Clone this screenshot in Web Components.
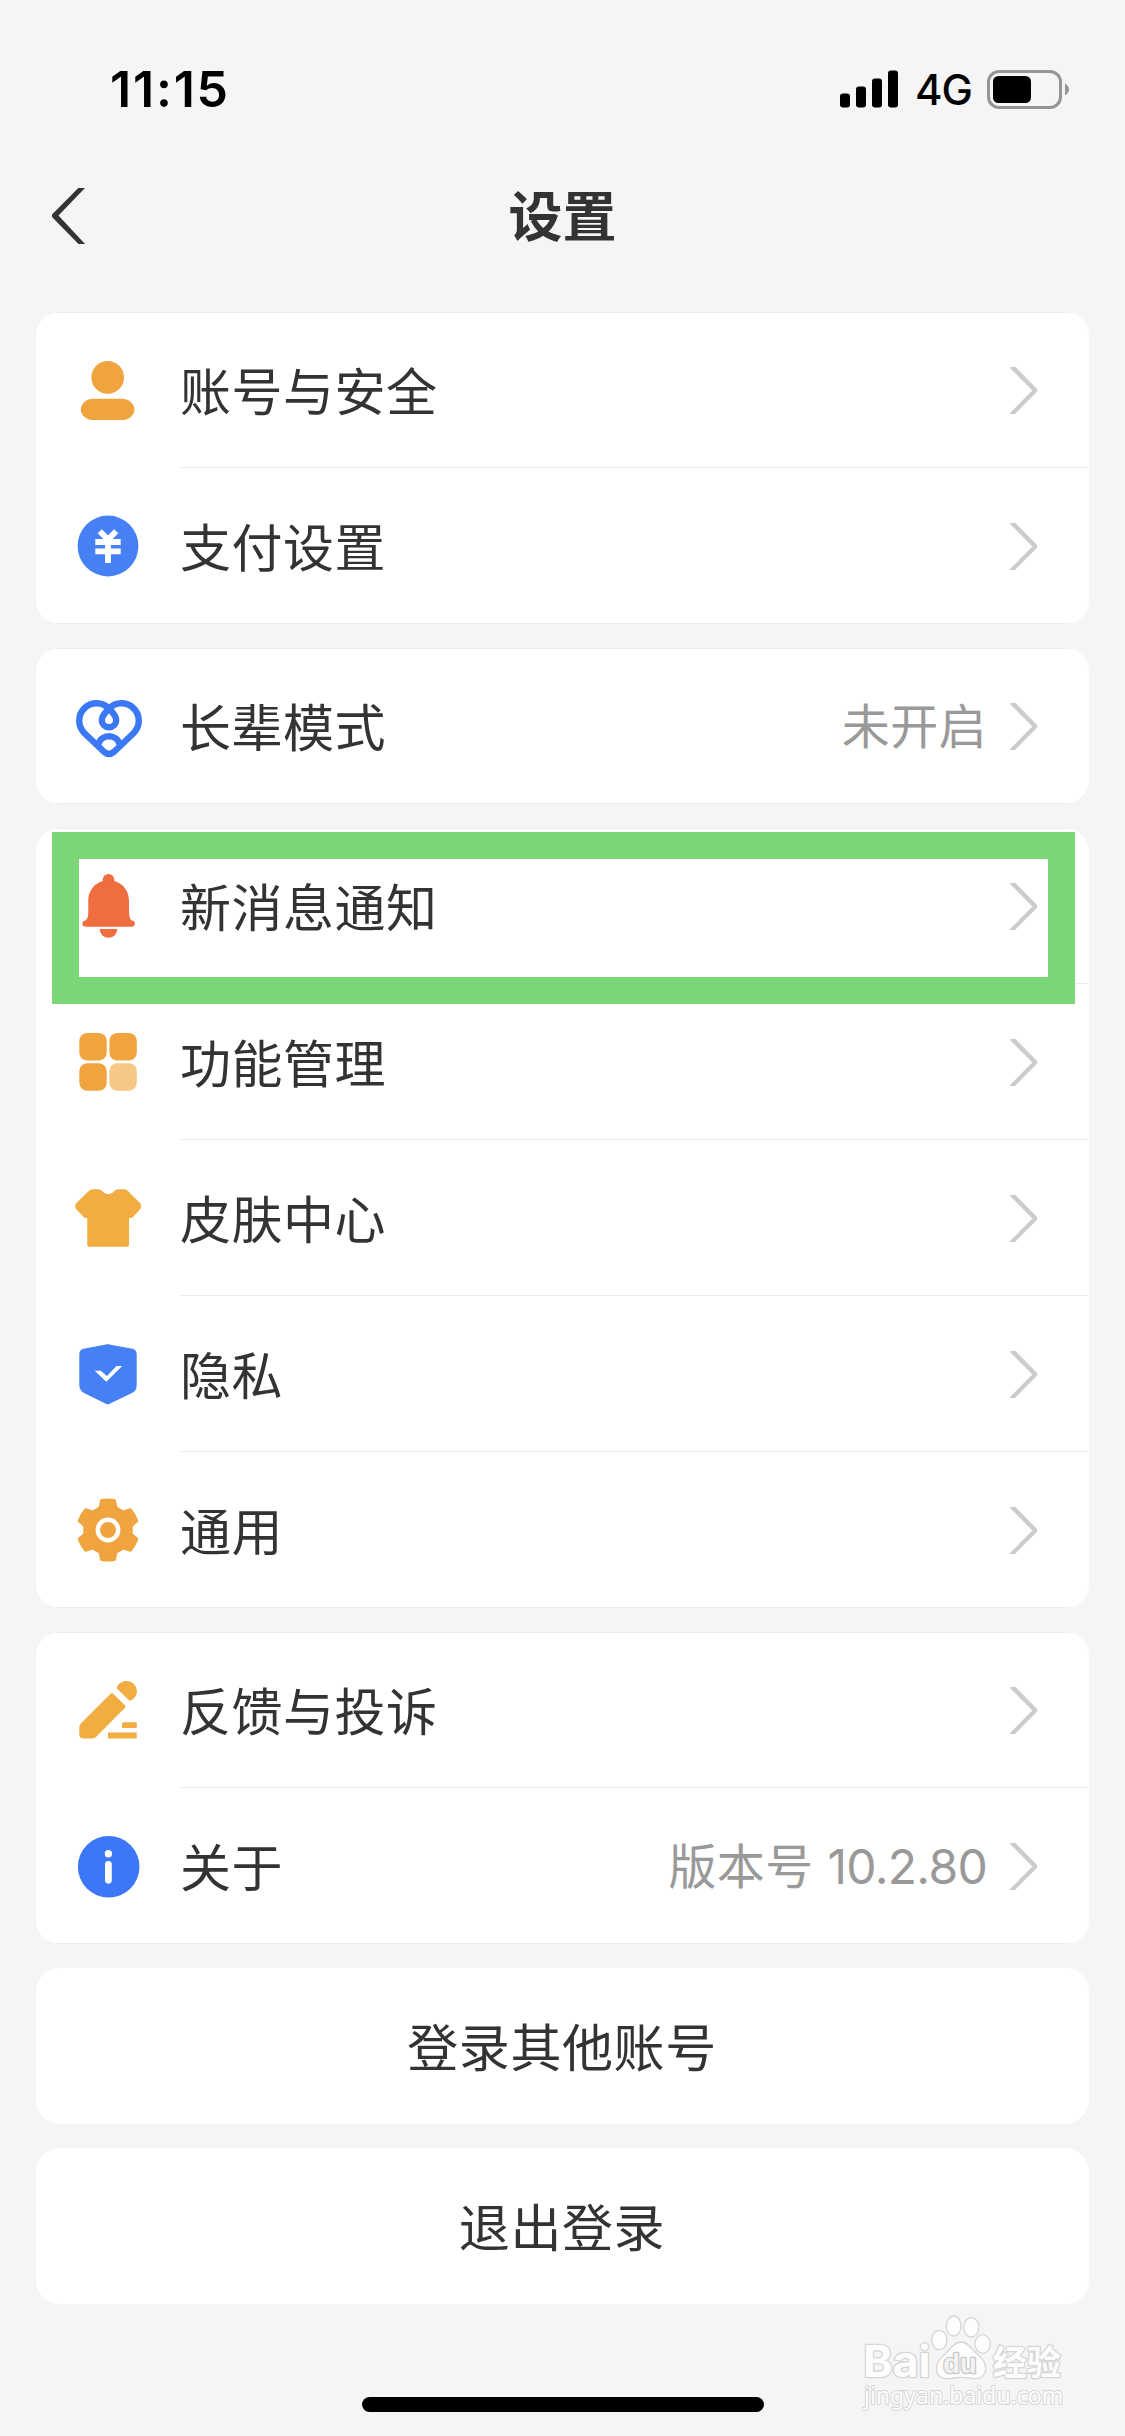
<!DOCTYPE html>
<html lang="zh-CN">
<head>
<meta charset="utf-8">
<title>设置</title>
<style>
html, body { margin: 0; padding: 0; }
body { width: 1125px; height: 2436px; overflow: hidden; background: #f5f5f5; font-family: Inter, "Noto Sans CJK SC", sans-serif; color: #333; }
</style>
</head>
<body>
<settings-page>
  <status-bar time="11:15" network="4G"></status-bar>
  <nav-header>设置</nav-header>
  <settings-card>
    <settings-row icon="user">账号与安全</settings-row>
    <settings-row icon="yen">支付设置</settings-row>
  </settings-card>
  <settings-card>
    <settings-row icon="heart" value="未开启">长辈模式</settings-row>
  </settings-card>
  <settings-card>
    <settings-row icon="bell">新消息通知</settings-row>
    <settings-row icon="grid">功能管理</settings-row>
    <settings-row icon="shirt">皮肤中心</settings-row>
    <settings-row icon="shield">隐私</settings-row>
    <settings-row icon="gear">通用</settings-row>
    <highlight-frame slot="overlay"></highlight-frame>
  </settings-card>
  <settings-card>
    <settings-row icon="pencil">反馈与投诉</settings-row>
    <settings-row icon="info" value="版本号 10.2.80">关于</settings-row>
  </settings-card>
  <action-button>登录其他账号</action-button>
  <action-button>退出登录</action-button>
  <home-indicator slot="footer"></home-indicator>
  <site-watermark slot="footer"></site-watermark>
</settings-page>
<script>
const define = (name, render) => customElements.define(name, class extends HTMLElement {
  constructor() { super(); this.attachShadow({ mode: "open" }); }
  connectedCallback() { this.shadowRoot.innerHTML = render(this); }
});

const icons = {
  user: `<g fill="#efa43f"><circle cx="35.7" cy="23.4" r="16.3"/><rect x="8.8" y="44.8" width="53.6" height="21.2" rx="12.5" ry="10.6"/></g>`,
  yen: `<circle cx="36" cy="36" r="30.4" fill="#4580f5"/><path d="M27.8 21.2 36 29.6 44.2 21.2M23.3 32H48.7M23.3 41.3H48.7M36 29V53" fill="none" stroke="#fff" stroke-width="5.8"/>`,
  heart: `<g fill="none" stroke="#3b78f6" stroke-width="6.4" stroke-linejoin="round"><path d="M7.2 30.7A17.4 17.4 0 0 1 24.7 13.3C30.5 13.3 34 15.6 37 18.6C40 21.6 44.2 25.5 44.2 30.2A7.2 7 0 0 1 29.8 30.2C29.8 25.5 34 21.6 37 18.6C40 15.6 43.5 13.3 49.3 13.3A17.4 17.4 0 0 1 66.8 30.7C66.8 37 64.5 40.2 61 43.7L41.8 62Q37 66 32.2 62L13 43.7C9.5 40.2 7.2 37 7.2 30.7Z"/><path d="M26.3 54.5C29 43.5 45 43.5 47.7 54.5"/></g>`,
  bell: `<g fill="#ee6e3f"><circle cx="36.5" cy="10" r="5.9"/><path d="M16.3 31C16.3 19 25 10.3 36.6 10.3S57 19 57 31V42C57 46 58 49 59.5 50.5A3.1 3.1 0 0 1 60 56.7H13.3A3.1 3.1 0 0 1 13.8 50.5C15.3 49 16.3 46 16.3 42Z"/><path d="M27.7 59H45.3A8.8 8.7 0 0 1 27.7 59Z"/></g>`,
  grid: `<g fill="#efa43f"><rect x="7.3" y="7" width="27.4" height="27.6" rx="8"/><rect x="37.4" y="7" width="27.4" height="27.6" rx="8"/><rect x="7.3" y="37.2" width="27.4" height="27.6" rx="8"/><rect x="37.4" y="37.2" width="27.4" height="27.6" rx="8" fill="#f5c985"/></g>`,
  shirt: `<path fill="#f1ad42" d="M20.5 7.3H26C31 7.3 30.5 12 36.3 12S41.7 7.3 46.7 7.3H52.2Q54.2 7.3 55.7 8.8L68 21Q70.2 24 68.4 27L61.5 34.5Q60.2 36 58.5 36H57V63Q57 64.8 55.2 64.8H17Q15.3 64.8 15.3 63V36H14.2Q12.500 36 11.2 34.5L4.2 27.3Q2 24.3 4.4 21L17 8.8Q18.5 7.3 20.5 7.3Z"/>`,
  shield: `<path fill="#4580f5" d="M34 6.4Q35.7 5.8 37.4 6.4L60.5 10.7Q64.7 12 64.7 16V47Q64.7 52.5 60.5 54.8L37.6 65.8Q35.7 66.8 33.8 65.8L11.5 54.8Q7.3 52 7.3 47V16Q7.3 12 11.5 10.7Z"/><path fill="#fff" d="M22.7 32.8H28.7L35 38 44.5 28H50.2L34.3 43.8Z"/>`,
  gear: `<g transform="translate(36 36)"><g fill="#efa43f" stroke="#efa43f" stroke-width="3" stroke-linejoin="round"><circle r="23.3"/><path id="t" d="M-8.5 -20 -6.4 -29.5Q0 -30.6 6.4 -29.5L8.5 -20V20L6.4 29.5Q0 30.6 -6.4 29.5L-8.5 20Z"/><use href="#t" transform="rotate(60)"/><use href="#t" transform="rotate(120)"/></g><circle r="10.2" fill="none" stroke="#fff" stroke-width="4.4"/></g>`,
  pencil: `<g fill="#f1ad42"><path d="M45.2 14.8Q44.2 13.5 45.2 12.3C47.3 9 50.5 7 54.7 7A10.3 10.3 0 0 1 65 17.3C65 21.3 62.5 24.3 59.5 26.3Q58 27.2 56.8 26Z"/><path d="M38.5 19.7Q39.7 18.5 41 19.7L53 31.2Q54.3 32.5 53 33.8L24.5 62.5Q22.7 64.5 20 64.5H11.5Q7.3 64.5 7.3 60.5V53.5Q7.3 51 9 49.3Z"/><path d="M51.5 48.2H64.7V54H50V49.7Q50 48.2 51.5 48.2ZM36 58.5H64.7V64.5H36Z"/></g>`,
  info: `<circle cx="36.7" cy="36.7" r="30.8" fill="#3b77f6"/><circle cx="36.4" cy="23.7" r="3.7" fill="#fff"/><rect x="33" y="31" width="6.8" height="22.6" rx="3.4" fill="#fff"/>`
};

define("settings-page", () => `
  <style>
    :host { display: flex; flex-direction: column; width: 1125px; height: 2436px; position: relative; }
    main { display: flex; flex-direction: column; gap: 24px; padding: 0 36px; }
    footer { margin-top: auto; padding-bottom: 24px; display: flex; justify-content: center; }
  </style>
  <main><slot></slot></main>
  <footer><slot name="footer"></slot></footer>`);

define("status-bar", el => `
  <style>
    :host { display: flex; justify-content: space-between; align-items: center; height: 132px; box-sizing: border-box; margin: 0 -36px -24px; padding: 46px 56px 0 110px; color: #000; }
    .time { font: 600 50px/60px Inter, sans-serif; letter-spacing: 1.8px; }
    .right { display: flex; align-items: center; }
    .net { font: 450 42px/60px Inter, sans-serif; letter-spacing: -1px; width: 54px; margin: 1px 18px 0 17px; white-space: nowrap; }
    svg { display: block; }
  </style>
  <span class="time">${el.getAttribute("time")}</span>
  <div class="right">
    <svg width="58" height="38" viewBox="0 0 58 38"><rect y="23.5" width="10" height="14" rx="3"/><rect x="16" y="16.5" width="10" height="21" rx="3"/><rect x="32" y="8.5" width="10" height="29" rx="3"/><rect x="48" y=".5" width="10" height="37" rx="3"/></svg>
    <span class="net">${el.getAttribute("network")}</span>
    <svg width="82" height="39" viewBox="0 0 82 39"><rect x="1.5" y="1.5" width="72" height="36" rx="10.5" fill="none" stroke="#959595" stroke-width="3"/><rect x="6" y="6" width="38" height="27" rx="5.5"/><path d="M78 13.5Q82 16 82 19.5T78 25.5Z" fill="#959595"/></svg>
  </div>`);

define("nav-header", () => `
  <style>
    :host { display: grid; grid-template-columns: 33px 1fr 33px; align-items: center; height: 180px; box-sizing: border-box; padding: 0 15.5px 12.5px; margin-bottom: -24px; }
    h1 { margin: -4px 0 0; text-align: center; font: 600 54px/72px "Noto Sans CJK SC", sans-serif; }
    svg { display: block; }
  </style>
  <svg width="33" height="56" viewBox="0 0 33 56"><path d="M26.3 0H33L6.5 27.5 33 56H26.5L0.5 29.5Q-.8 27.7 .5 26Z" fill="#333"/></svg>
  <h1><slot></slot></h1>`);

define("settings-card", () => `
  <style>
    :host { display: block; position: relative; background: #fff; border-radius: 24px; overflow: hidden; }
    .rows { display: flex; flex-direction: column; background: linear-gradient(#ededed, #ededed) 0 0 / 100% 1px no-repeat, linear-gradient(#ededed, #ededed) 0 100% / 100% 1px no-repeat; }
  </style>
  <div class="rows"><slot></slot></div>
  <slot name="overlay"></slot>`);

define("settings-row", el => `
  <style>
    :host { display: flex; height: 156px; padding-left: 36px; align-items: stretch; }
    .icon { flex: none; align-self: center; width: 72px; height: 72px; margin-right: 36px; overflow: visible; }
    .body { flex: 1; display: flex; align-items: center; padding: 1px 51px 0 0; border-bottom: 1px solid #ebebeb; }
    :host(:last-of-type) .body { border-bottom-color: transparent; }
    .label { flex: 1; font: 400 51px/72px "Noto Sans CJK SC", sans-serif; letter-spacing: .5px; padding-bottom: 2px; white-space: nowrap; }
    .value { font: 400 48px/72px Inter, "Noto Sans CJK SC", sans-serif; color: #999; letter-spacing: .4px; margin-right: 23px; padding-top: 1px; white-space: nowrap; }
    .num { letter-spacing: -.7px; }
    .chev { flex: none; display: block; }
  </style>
  <svg class="icon" viewBox="0 0 72 72">${icons[el.getAttribute("icon")]}</svg>
  <div class="body">
    <span class="label"><slot></slot></span>
    ${el.hasAttribute("value") ? `<span class="value">${el.getAttribute("value").replace(/[\d.]+/, '<span class="num">$&</span>')}</span>` : ""}
    <svg class="chev" width="28" height="47" viewBox="0 0 28 47"><path d="M0 0H5.5L26.8 21.8Q28 23.4 26.8 25L5 47H0V46L22.3 23.4 0 1Z" fill="#ccc"/></svg>
  </div>`);

define("highlight-frame", () => `
  <style>
    :host { display: block; position: absolute; left: 16px; top: 4px; width: 1023px; height: 172px; box-sizing: border-box; border: 27px solid #7bd678; }
  </style>`);

define("action-button", () => `
  <style>
    :host { display: block; }
    button { all: unset; box-sizing: border-box; display: flex; width: 100%; height: 156px; align-items: center; justify-content: center; background: #fff; border-radius: 24px; font: 400 51px/72px "Noto Sans CJK SC", sans-serif; letter-spacing: .6px; padding: 0 1px 2px 0; }
  </style>
  <button><span><slot></slot></span></button>`);

define("home-indicator", () => `
  <style>:host { display: block; width: 402px; height: 15px; border-radius: 8px; background: #000; }</style>`);

define("site-watermark", () => `
  <style>
    :host { display: block; position: absolute; left: 860px; top: 2313px; }
    svg { display: block; }
    text { paint-order: stroke; }
  </style>
  <svg width="206.67" height="100" viewBox="120 100 620 300" fill="#fdfdfd" stroke="#d6d6d6" stroke-width="8" stroke-linejoin="round">
    <g stroke-width="4">
      <ellipse cx="358" cy="181" rx="23" ry="29"/><ellipse cx="401" cy="139" rx="22" ry="30"/><ellipse cx="454" cy="143" rx="23" ry="29"/><ellipse cx="488" cy="193" rx="23" ry="28"/>
      <path d="M423 187C443 187 452 205 468 220C486 236 497 246 497 266C497 288 482 299 462 297C446 295 438 293 423 293S400 296 384 297C362 299 349 286 349 266C349 246 362 236 378 220C394 205 403 187 423 187Z"/>
    </g>
    <text x="130" y="293" font-family="Inter" font-weight="700" font-size="130" textLength="202" lengthAdjust="spacingAndGlyphs">Bai</text>
    <text x="370" y="279" font-family="Liberation Sans" font-weight="700" font-size="84" textLength="100" lengthAdjust="spacingAndGlyphs" fill="#f2f2f2" stroke="#c8c8c8">du</text>
    <text x="518" y="285" font-family="Noto Sans CJK SC" font-weight="700" font-size="104" textLength="204" lengthAdjust="spacingAndGlyphs">经验</text>
    <text x="132" y="373" font-family="Noto Sans" font-size="70" textLength="598" lengthAdjust="spacingAndGlyphs" stroke-width="6">jingyan.baidu.com</text>
  </svg>`);
</script>
</body>
</html>
